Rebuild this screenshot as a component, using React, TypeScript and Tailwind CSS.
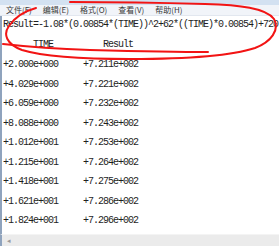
import React from 'react';

const rows: [string, string][] = [
  ['+2.000e+000', '+7.211e+002'],
  ['+4.029e+000', '+7.221e+002'],
  ['+6.059e+000', '+7.232e+002'],
  ['+8.088e+000', '+7.243e+002'],
  ['+1.012e+001', '+7.253e+002'],
  ['+1.215e+001', '+7.264e+002'],
  ['+1.418e+001', '+7.275e+002'],
  ['+1.621e+001', '+7.286e+002'],
  ['+1.824e+001', '+7.296e+002'],
];

const menus = ['文件(F)', '编辑(E)', '格式(O)', '查看(V)', '帮助(H)'];

export default function App() {
  return (
    <div className="relative w-[279px] h-[246px] overflow-hidden bg-white flex flex-col">
      {/* window frame strip */}
      <div className="h-[5px] bg-[#d3e1f1]" />

      {/* menu bar */}
      <div
        className="h-[11px] flex items-center bg-[#f1f4f9] border-b border-[#e2e7ef] pl-[6px] gap-[11px] text-[#3a3a3a] text-[8px] leading-none"
        style={{ fontFamily: '"Noto Sans CJK SC", sans-serif' }}
      >
        {menus.map((m) => (
          <span key={m}>{m}</span>
        ))}
      </div>

      {/* editor area */}
      <div
        className="flex-1 flex flex-col border-l-2 border-[#8fa3bd] pl-[1px] text-[#1e1e1e] text-[10px] tracking-[-1px] whitespace-pre"
        style={{ fontFamily: '"Liberation Mono", monospace' }}
      >
        <div className="h-[18px] leading-[17px]">Result=-1.08*(0.00854*(TIME))^2+62*((TIME)*0.00854)+720</div>
        <div className="h-[21px] leading-[21px]">{'      TIME          Result'}</div>
        {rows.map(([t, r]) => (
          <div key={t} className="leading-[19.5px]">
            {t}
            {'     '}
            {r}
          </div>
        ))}
      </div>

      {/* horizontal scrollbar */}
      <div className="h-[12px] flex items-center border-l-2 border-[#8fa3bd] bg-[#ebebeb] border-t border-t-[#f4f4f4]">
        <span className="ml-[5px] text-[7px] text-[#9a9a9a] leading-none">◂</span>
      </div>

      {/* red hand-drawn annotation */}
      <svg className="absolute left-0 top-0 pointer-events-none" width="279" height="246">
        <path
          d="M 70 2 C 120 2, 170 3, 205 4 C 240 5, 266 8, 274 19 C 280 30, 271 42, 255 48 C 228 57, 180 59, 130 59 C 90 59, 45 57, 22 50 C 6 44, 3 34, 9 26 C 15 17, 25 11, 36 8"
          fill="none"
          stroke="#f21414"
          strokeWidth="2"
          strokeLinecap="round"
        />
        <path
          d="M 3 44 C 30 47, 60 49, 90 50 C 130 51, 170 52, 208 52"
          fill="none"
          stroke="#f21414"
          strokeWidth="2"
          strokeLinecap="round"
        />
      </svg>
    </div>
  );
}
